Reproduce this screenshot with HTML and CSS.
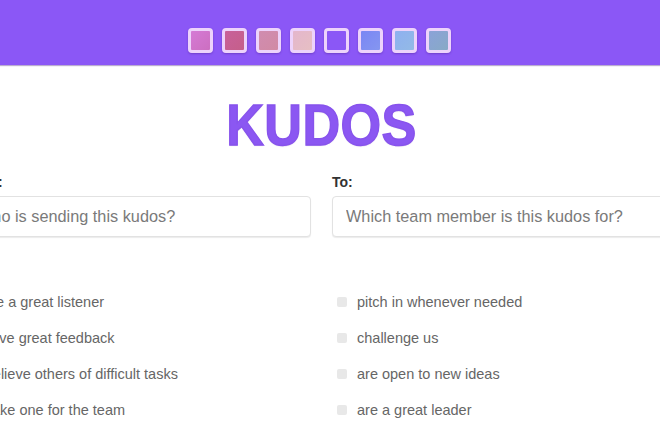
FILE: index.html
```html
<!DOCTYPE html>
<html>
<head>
<meta charset="utf-8">
<link rel="stylesheet" href="styles.css">
</head>
<body>
<header class="topbar">
  <span class="swatch s1"></span>
  <span class="swatch s2"></span>
  <span class="swatch s3"></span>
  <span class="swatch s4"></span>
  <span class="swatch s5"></span>
  <span class="swatch s6"></span>
  <span class="swatch s7"></span>
  <span class="swatch s8"></span>
</header>
<main class="page">
  <h1 class="title">KUDOS</h1>
  <div class="grid">
    <div class="field">
      <label class="label">From:</label>
      <input class="input" type="text" placeholder="Who is sending this kudos?">
    </div>
    <div class="field">
      <label class="label">To:</label>
      <input class="input" type="text" placeholder="Which team member is this kudos for?">
    </div>
    <ul class="list">
      <li class="item"><span class="box"></span>be a great listener</li>
      <li class="item"><span class="box"></span>give great feedback</li>
      <li class="item"><span class="box"></span>relieve others of difficult tasks</li>
      <li class="item"><span class="box"></span>take one for the team</li>
    </ul>
    <ul class="list">
      <li class="item"><span class="box"></span>pitch in whenever needed</li>
      <li class="item"><span class="box"></span>challenge us</li>
      <li class="item"><span class="box"></span>are open to new ideas</li>
      <li class="item"><span class="box"></span>are a great leader</li>
    </ul>
  </div>
</main>
</body>
</html>
```
FILE: styles.css
```css
html, body {
  margin: 0;
  padding: 0;
  overflow: hidden;
  background: #fff;
  font-family: "Liberation Sans", Arial, sans-serif;
}
.topbar {
  height: 65px;
  box-sizing: border-box;
  background: #8b57f6;
  display: flex;
  justify-content: center;
  align-items: flex-start;
  gap: 9px;
  padding: 28px 21px 0 0;
  box-shadow: 0 1px 1px rgba(60, 20, 120, 0.35);
}
.swatch {
  width: 19px;
  height: 19px;
  border: 3px solid #edd3fb;
  border-radius: 4px;
  box-shadow: 0 1px 2px rgba(60, 20, 120, 0.35);
}
.s1 { background: linear-gradient(135deg, #d57ad5, #cc6fc0); }
.s2 { background: linear-gradient(135deg, #c8609a, #c55f8a); }
.s3 { background: linear-gradient(135deg, #d08cb0, #d18aa4); }
.s4 { background: linear-gradient(135deg, #e4b6cc, #e6bfc3); }
.s5 { background: #8b57f6; }
.s6 { background: linear-gradient(135deg, #7a86f4, #8596f0); }
.s7 { background: linear-gradient(135deg, #8eb0f0, #93bae6); }
.s8 { background: linear-gradient(135deg, #8ba2d8, #87aac6); }
.page {
  margin-left: -37px;
  width: 717px;
}
.title {
  margin: 31px 0 0;
  text-align: center;
  font-size: 57px;
  line-height: 58px;
  font-weight: 900;
  letter-spacing: 0.5px;
  color: #8b57f2;
  -webkit-text-stroke: 1.4px #8753ec;
  text-shadow: 0 1px 1px rgba(90, 40, 160, 0.25);
  transform: scaleX(0.915);
}
.grid {
  display: grid;
  grid-template-columns: 348px 348px;
  column-gap: 21px;
  margin-top: 20px;
}
.field {
  display: flex;
  flex-direction: column;
}
.label {
  font-size: 14px;
  font-weight: bold;
  color: #333;
  line-height: 16px;
  margin-bottom: 6px;
}
.input {
  height: 41px;
  box-sizing: border-box;
  border: 1px solid #e2e2e2;
  border-radius: 4px;
  box-shadow: 0 1px 1px rgba(0, 0, 0, 0.08);
  padding: 0 13px;
  font-family: inherit;
  font-size: 16.3px;
  color: #333;
  outline: none;
}
.input::placeholder {
  color: #7a7a7a;
}
.list {
  list-style: none;
  margin: 56px 0 0;
  padding: 0;
  display: flex;
  flex-direction: column;
  gap: 18px;
}
.item {
  display: flex;
  align-items: center;
  font-size: 14.5px;
  line-height: 18px;
  color: #666;
}
.box {
  width: 10px;
  height: 10px;
  border-radius: 2px;
  background: #e8e8e8;
  margin: 0 10px 0 5px;
}
```
